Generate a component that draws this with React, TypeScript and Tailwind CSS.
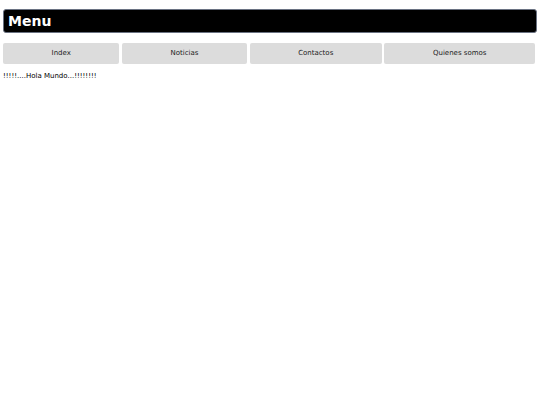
const links = ["Index", "Noticias", "Contactos", "Quienes somos"];

export default function App() {
  return (
    <div className="min-h-[405px] bg-white px-[3px] pt-[9px] font-['DejaVu_Sans',sans-serif] text-black">
      <div className="flex h-[24px] items-center rounded-[3px] border border-gray-500 bg-black pl-[4px]">
        <h1 className="text-[14px] font-bold leading-none text-white">Menu</h1>
      </div>

      <nav className="mt-[10px] flex gap-[2.5px] pr-[2px]">
        {links.map((l) => (
          <a
            key={l}
            href="#"
            className="flex h-[21px] flex-auto items-center justify-center rounded-[2px] bg-[#dcdcdc] text-[7px] text-[#222]"
          >
            {l}
          </a>
        ))}
      </nav>

      <p className="mt-[7px] text-[7px]">!!!!!....Hola Mundo...!!!!!!!!</p>
    </div>
  );
}
